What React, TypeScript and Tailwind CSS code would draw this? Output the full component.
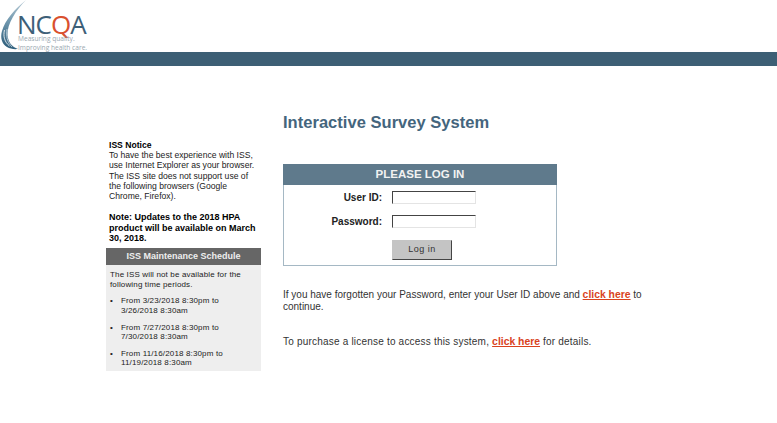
const sans = "font-['Liberation_Sans',Arial,sans-serif]";

function Logo() {
  return (
    <div className="relative h-[52px] w-[130px] overflow-hidden">
      <svg className="absolute left-0 top-0" width="30" height="52" viewBox="0 0 30 52" fill="none">
        <defs>
          <linearGradient id="swoosh" x1="24" y1="0" x2="8" y2="48" gradientUnits="userSpaceOnUse">
            <stop offset="0" stopColor="#b9cbd6" />
            <stop offset="0.5" stopColor="#6f97ae" />
            <stop offset="1" stopColor="#2f5f7c" />
          </linearGradient>
        </defs>
        <path d="M26 0C15 9 5 20 2 31c-2 7 0 13 5 16 3 1.800 7 2.500 11 2-6-2-10-7-10.500-14C7 24 16 10 26 0z" fill="url(#swoosh)" />
        <path d="M4.500 30c-1.500 6 0 12 5 16" stroke="#ffffff" strokeWidth="0.8" />
        <path d="M7 29c-1 7 0 13 5 18" stroke="#c9d7df" strokeWidth="0.8" />
      </svg>
      <div className="absolute left-[17px] top-[14px] text-[26px] leading-[20px] tracking-[-1px] text-[#3d6078] font-['Open_Sans',sans-serif]">
        NC<span className="text-[#d9502e]">Q</span>A
      </div>
      <div className="absolute left-[18px] top-[34px] text-[6.6px] leading-[9px] text-[#9aa8b0] font-['Open_Sans',sans-serif]">
        <div>Measuring quality.</div>
        <div>Improving health care.</div>
      </div>
    </div>
  );
}

function Notice() {
  return (
    <div className="w-[155px] pt-[74px] text-black">
      <div className="px-[3px] text-[8.6px] leading-[10.2px] text-[#222222]">
        <p className="font-bold text-black">ISS Notice</p>
        <p>
          To have the best experience with ISS, use Internet Explorer as your browser. The ISS site does not support use of the following browsers (Google Chrome, Firefox).
        </p>
        <p className="mt-[11px] text-[9px] leading-[10.5px] font-bold text-black">
          Note: Updates to the 2018 HPA product will be available on March 30, 2018.
        </p>
      </div>
      <div className="mt-[4.5px] flex h-[17px] items-center justify-center bg-[#666666] text-[9px] font-bold text-[#eeeeee]">
        ISS Maintenance Schedule
      </div>
      <div className="h-[106px] bg-[#eeeeee] px-[4px] pt-[5px] text-[8px] leading-[9.6px] tracking-[0.15px] text-[#222222]">
        <p>The ISS will not be available for the following time periods.</p>
        <ul className="mt-[7px] flex flex-col gap-[7px]">
          {[
            ["From 3/23/2018 8:30pm to", "3/26/2018 8:30am"],
            ["From 7/27/2018 8:30pm to", "7/30/2018 8:30am"],
            ["From 11/16/2018 8:30pm to", "11/19/2018 8:30am"],
          ].map(([a, b]) => (
            <li key={a} className="flex">
              <span className="w-[11px]">•</span>
              <span>
                {a}
                <br />
                {b}
              </span>
            </li>
          ))}
        </ul>
      </div>
    </div>
  );
}

function LoginPanel() {
  return (
    <div className="mt-[32px] h-[102px] w-[274px] border border-[#a5b8c4] border-t-0">
      <div className="-mx-px flex h-[21px] items-center justify-center bg-[#5f7a8c] text-[11.5px] font-bold text-[#f2f2f2]">
        PLEASE LOG IN
      </div>
      <div className="mt-[6px] flex items-center">
        <label className="w-[98px] text-right text-[10px] font-bold leading-[13px] text-[#222222]">User ID:</label>
        <input className="ml-[10px] h-[13px] w-[84px] border border-[#e4e4e4] border-l-[#444444] border-t-[#444444] bg-white" />
      </div>
      <div className="mt-[11px] flex items-center">
        <label className="w-[98px] text-right text-[10px] font-bold leading-[13px] text-[#222222]">Password:</label>
        <input type="password" className="ml-[10px] h-[13px] w-[84px] border border-[#e4e4e4] border-l-[#444444] border-t-[#444444] bg-white" />
      </div>
      <button className="ml-[108px] mt-[12px] block h-[20px] w-[60px] border border-[#c4c4c4] border-b-[#444444] border-r-[#444444] bg-[#c4c4c4] text-[9px] tracking-[0.5px] text-[#333333]">
        Log in
      </button>
    </div>
  );
}

function Main() {
  return (
    <div className="w-[362px] pt-[46px]">
      <h1 className="h-[20px] text-[16.5px] font-bold leading-[20px] tracking-[0.03px] text-[#44657d]">
        Interactive Survey System
      </h1>
      <LoginPanel />
      <p className="mt-[23px] text-[10px] leading-[12px] text-[#333333]">
        If you have forgotten your Password, enter your User ID above and{" "}
        <a className="text-[10.4px] font-bold leading-none text-[#d9431e] underline">click here</a> to continue.
      </p>
      <p className="mt-[23px] text-[10px] leading-[12px] tracking-[0.2px] text-[#333333]">
        To purchase a license to access this system,{" "}
        <a className="text-[10.4px] font-bold leading-none tracking-normal text-[#d9431e] underline">click here</a> for details.
      </p>
    </div>
  );
}

export default function App() {
  return (
    <div className={`${sans} h-[423px] w-[777px] overflow-hidden bg-white`}>
      <Logo />
      <div className="h-[14px] bg-[#3d5f75]" />
      <div className="ml-[106px] flex gap-[22px]">
        <Notice />
        <Main />
      </div>
    </div>
  );
}
